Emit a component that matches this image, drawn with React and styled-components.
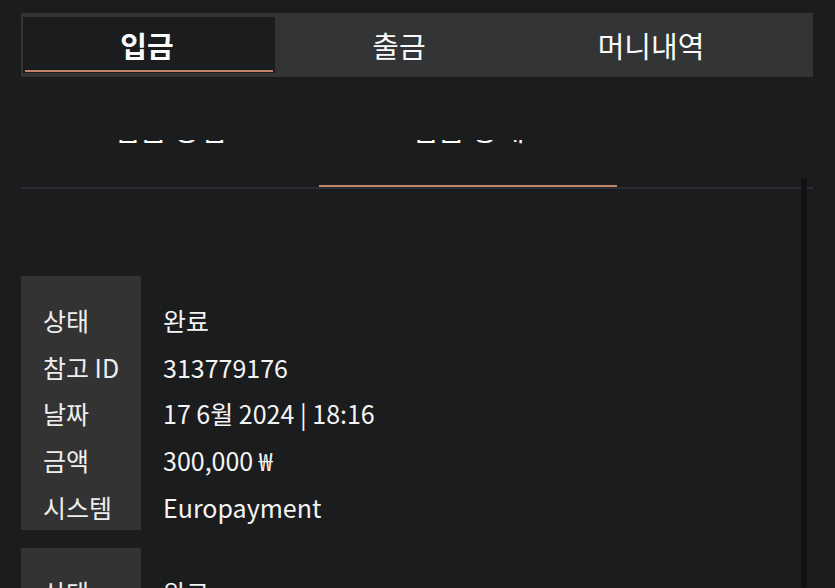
import React from "react";
import styled, { createGlobalStyle } from "styled-components";

const GlobalStyle = createGlobalStyle`
  html, body {
    margin: 0;
    padding: 0;
    background: #1b1c1e;
    overflow: hidden;
  }
  body {
    font-family: "Noto Sans CJK KR", "Noto Sans", sans-serif;
    color: #f2f2f2;
  }
  * { box-sizing: border-box; }
`;

const Page = styled.div`
  position: relative;
  width: 835px;
  height: 588px;
  padding: 13px 22px 0 21px;
  overflow: hidden;
  background: #1b1c1e;
`;

const TabBar = styled.nav`
  display: flex;
  height: 64px;
  padding: 4px 2px;
  background: #333436;
`;

const Tab = styled.div`
  flex: 0 0 252px;
  display: flex;
  flex-direction: column;
  background: ${(p) => (p.$active ? "#1b1c1e" : "transparent")};
`;

const TabLabel = styled.span`
  flex: 1;
  display: flex;
  align-items: center;
  justify-content: center;
  font-size: 29px;
  font-weight: ${(p) => (p.$active ? 700 : 400)};
  color: #fafafa;
  padding: 2px 4px 0 0;
`;

const TabLine = styled.span`
  height: 2px;
  margin: 0 2px 1px;
  background: ${(p) => (p.$active ? "#c08468" : "transparent")};
`;

const SubTabBar = styled.div`
  display: flex;
  margin-top: 63px;
  height: 49px;
  border-bottom: 2px solid #2d2e31;
`;

const SubTab = styled.div`
  flex: 0 0 298px;
  height: 47px;
  overflow: hidden;
  display: flex;
  align-items: flex-end;
  justify-content: center;
  padding-bottom: 40px;
  border-bottom: 2px solid ${(p) => (p.$active ? "#c08468" : "transparent")};
`;

const SubTabLabel = styled.span`
  font-size: 29px;
  line-height: 34px;
  white-space: nowrap;
  color: #ffffff;
`;

const List = styled.div`
  display: flex;
  flex-direction: column;
  gap: 18px;
  margin-top: 87px;
`;

const Card = styled.dl`
  margin: 0;
  display: grid;
  grid-template-columns: 120px 1fr;
  grid-auto-rows: 46.7px;
  padding-top: 21px;
  background: linear-gradient(to right, #333333 120px, transparent 120px);
`;

const Term = styled.dt`
  padding-left: 22px;
  font-size: 25px;
  line-height: 46.7px;
  color: #eeeeee;
  white-space: nowrap;
`;

const Desc = styled.dd`
  margin: 0;
  padding-left: 22px;
  font-size: 25px;
  line-height: 46.7px;
  color: #f4f4f4;
  white-space: nowrap;
`;

const ScrollThumb = styled.div`
  position: absolute;
  left: 801px;
  top: 178px;
  bottom: 0;
  width: 6px;
  border-radius: 3px;
  background: #111214;
`;

const rows = [
  ["상태", "완료"],
  ["참고 ID", "313779176"],
  ["날짜", "17 6월 2024 | 18:16"],
  ["금액", "300,000 ₩"],
  ["시스템", "Europayment"],
];

const tabs = ["입금", "출금", "머니내역"];
const subTabs = ["입금 방법", "입금 상세"];

export default function App() {
  return (
    <>
      <GlobalStyle />
      <Page>
        <TabBar>
          {tabs.map((t, i) => (
            <Tab key={t} $active={i === 0}>
              <TabLabel $active={i === 0}>{t}</TabLabel>
              <TabLine $active={i === 0} />
            </Tab>
          ))}
        </TabBar>
        <SubTabBar>
          {subTabs.map((t, i) => (
            <SubTab key={t} $active={i === 1}>
              <SubTabLabel>{t}</SubTabLabel>
            </SubTab>
          ))}
        </SubTabBar>
        <List>
          {[0, 1].map((c) => (
            <Card key={c}>
              {rows.map(([k, v]) => (
                <React.Fragment key={k}>
                  <Term>{k}</Term>
                  <Desc>{v}</Desc>
                </React.Fragment>
              ))}
            </Card>
          ))}
        </List>
        <ScrollThumb />
      </Page>
    </>
  );
}
